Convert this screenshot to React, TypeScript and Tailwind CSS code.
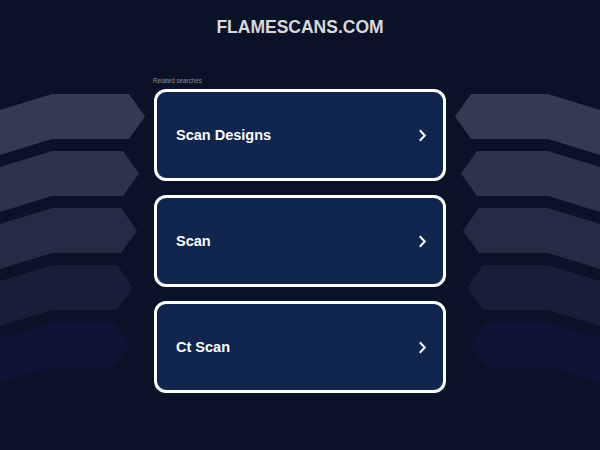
import React from "react";

const bands = [
  { T: 94, P: 145, c: "#343b50" },
  { T: 151, P: 139, c: "#2d3349" },
  { T: 208, P: 137, c: "#262b45" },
  { T: 265, P: 133, c: "#191d38" },
  { T: 322, P: 130, c: "#0d1436" },
];

function leftPts(T: number, P: number) {
  return [
    [0, T + 16],
    [52, T],
    [P - 16, T],
    [P, T + 22.5],
    [P - 16, T + 45],
    [52, T + 45],
    [0, T + 61],
  ];
}

function Bands() {
  return (
    <svg className="absolute inset-0" width="600" height="450" viewBox="0 0 600 450">
      {bands.map((b, i) => {
        const l = leftPts(b.T, b.P);
        const r = l.map(([x, y]) => [600 - x, y]);
        return (
          <g key={i} fill={b.c}>
            <polygon points={l.map((p) => p.join(",")).join(" ")} />
            <polygon points={r.map((p) => p.join(",")).join(" ")} />
          </g>
        );
      })}
    </svg>
  );
}

function Card({ label }: { label: string }) {
  return (
    <div className="h-[92px] w-[292px] rounded-[12px] border-[3px] border-white bg-[#11264e] flex items-center justify-between pl-[19px] pr-[16px]">
      <span className="text-[14.5px] font-bold text-white leading-none">{label}</span>
      <svg width="9" height="13" viewBox="0 0 9 13" fill="none">
        <path d="M1.8 1.2 L6.8 6.5 L1.8 11.8" stroke="white" strokeWidth="2" />
      </svg>
    </div>
  );
}

export default function App() {
  return (
    <div
      className="relative w-[600px] h-[450px] overflow-hidden bg-[#0a1227]"
      style={{ fontFamily: '"Liberation Sans", Arial, sans-serif' }}
    >
      <Bands />
      <div className="relative flex flex-col items-center">
        <div className="mt-[17px] h-[21px] leading-[21px] text-[17.5px] font-bold text-[#d9d9d9]">
          FLAMESCANS.COM
        </div>
        <div className="mt-[39px] w-[292px]">
          <div className="h-[8px] leading-[8px] text-[6.3px] text-[#8a909c] -ml-[1px]">Related searches</div>
          <div className="mt-[4px] flex flex-col gap-[14px]">
            <Card label="Scan Designs" />
            <Card label="Scan" />
            <Card label="Ct Scan" />
          </div>
        </div>
      </div>
    </div>
  );
}
